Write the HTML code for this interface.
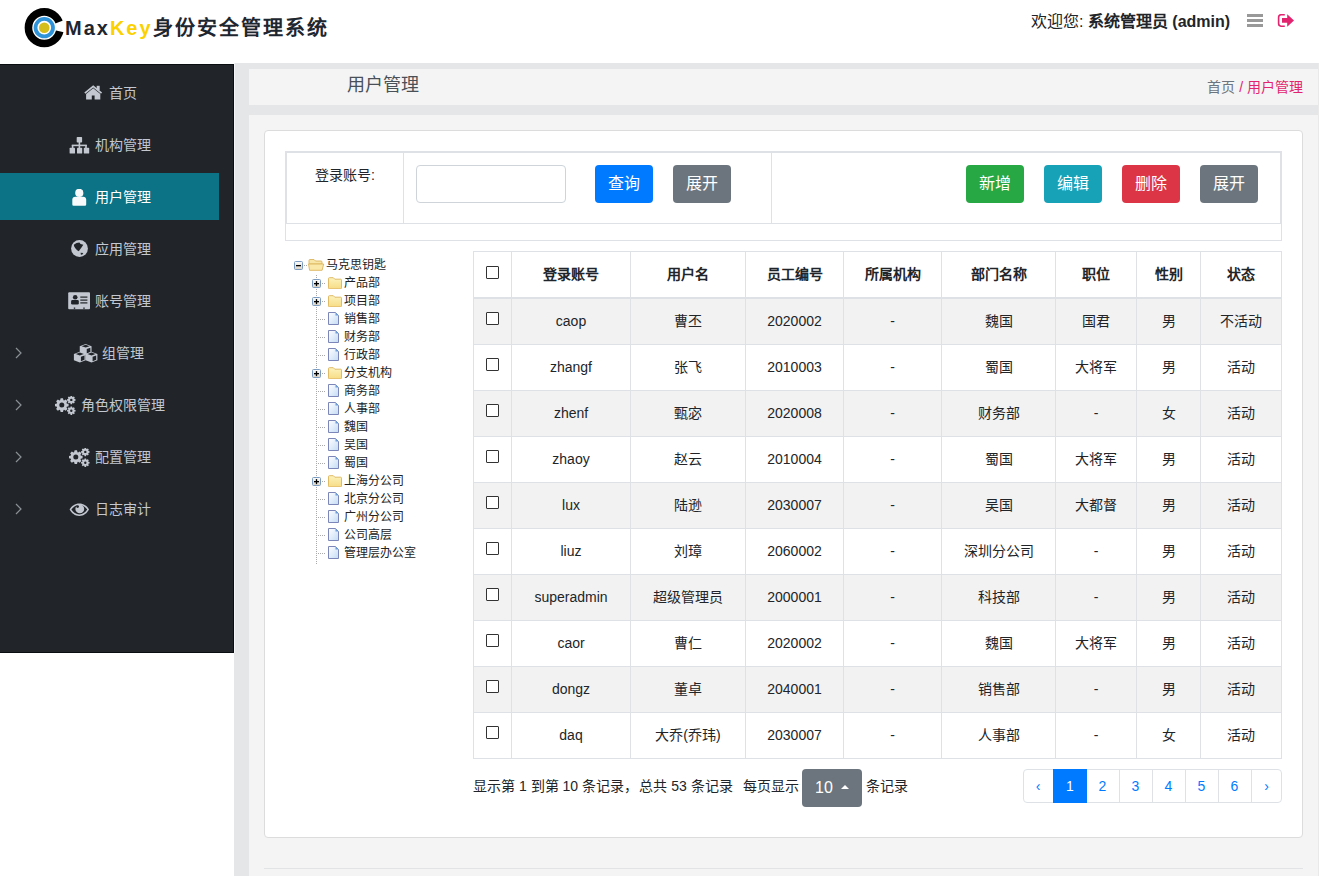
<!DOCTYPE html><html lang="zh-CN"><head><meta charset="utf-8"><title>MaxKey</title><style>
*{box-sizing:border-box;margin:0;padding:0}
html,body{width:1319px;height:876px;overflow:hidden;background:#fff;font-family:"Liberation Sans",sans-serif;color:#212529}
.abs{position:absolute}
.t{position:absolute;white-space:nowrap;line-height:1}
</style></head><body>
<svg class="abs" style="left:22px;top:5px" width="45" height="45" viewBox="0 0 45 45">
<circle cx="22.25" cy="22.7" r="15.8" fill="none" stroke="#000" stroke-width="7.6"/>
<path d="M22.25 22.7L50.26 11.95L51.48 29.45z" fill="#fff"/>
<circle cx="22.25" cy="22.7" r="8.75" fill="none" stroke="#2e93d9" stroke-width="3.8"/>
<circle cx="22.25" cy="22.7" r="5.3" fill="#d4be1c"/>
</svg>
<div class="t" style="left:65px;top:18px;font-size:20px;font-weight:bold;letter-spacing:2px;color:#1e2630">Max<span style="color:#fcd100">Key</span>身份安全管理系统</div>
<div class="t" style="left:1031px;top:14px;font-size:16px;color:#212529">欢迎您: <b>系统管理员 (admin)</b></div>
<div class="abs" style="left:1247px;top:14px;width:16px;height:13px;background:linear-gradient(#999 0,#999 3px,transparent 3px,transparent 5px,#999 5px,#999 8px,transparent 8px,transparent 10px,#999 10px,#999 13px,transparent 13px)"></div>
<svg class="abs" style="left:1277px;top:14px" width="17" height="13" viewBox="0 0 17 13">
<path d="M7.8 0.8H4A2.6 2.6 0 0 0 1.6 3.4v6.2A2.6 2.6 0 0 0 4 12.2H7.8" fill="none" stroke="#e2246f" stroke-width="1.6"/>
<path d="M5 3.9H10.2V0.3L17 6.5L10.2 12.8V8.7H5z" fill="#e2246f"/>
</svg>
<div class="abs" style="left:234px;top:63px;width:1085px;height:813px;background:#e5e6e8"></div>
<div class="abs" style="left:234px;top:63px;width:1px;height:590px;background:#f3f4f6"></div>
<div class="abs" style="left:249px;top:69px;width:1069px;height:36px;background:#f4f4f4"></div>
<div class="abs" style="left:249px;top:115px;width:1069px;height:761px;background:#f4f4f4"></div>
<div class="abs" style="left:1318px;top:63px;width:1px;height:813px;background:#e9e9ea"></div>
<div class="t" style="left:347px;top:76px;font-size:18px;color:#495057">用户管理</div>
<div class="t" style="right:16px;top:80px;font-size:14px;color:#6c757d">首页 <span style="color:#e2246f">/ 用户管理</span></div>
<div class="abs" style="left:-1px;top:64px;width:235px;height:589px;background:#212529;border:1px solid #0b0e11"></div>
<div class="abs" style="left:0;top:173px;width:219px;height:47px;background:#0c7285"></div>
<div class="abs" style="left:84px;top:85px;display:flex"><svg width="19" height="15" viewBox="0 0 19 15"><path d="M0.3 7.5L9.2 0.3L18.1 7.5L17 8.7L9.2 2.4L1.4 8.7z" fill="#c2c7d0"/><rect x="12.7" y="0.8" width="3" height="4.5" fill="#c2c7d0"/><path d="M2.1 9L9.2 3.2L16.3 9V14.6H10.6V10.5H7.8V14.6H2.1z" fill="#c2c7d0"/></svg></div>
<div class="t" style="left:109px;top:86px;font-size:14px;color:#c2c7d0">首页</div>
<div class="abs" style="left:69px;top:137px;display:flex"><svg width="21" height="17" viewBox="0 0 21 17"><g fill="#c2c7d0"><rect x="7.7" y="0" width="5.4" height="5.4" rx="0.7"/><rect x="9.6" y="5" width="1.6" height="3.5"/><rect x="2.8" y="7.6" width="15" height="1.6"/><rect x="2.8" y="8" width="1.6" height="3"/><rect x="9.6" y="8" width="1.6" height="3"/><rect x="16.2" y="8" width="1.6" height="3"/><rect x="0.6" y="10.8" width="5.4" height="5.8" rx="0.7"/><rect x="8" y="10.8" width="5.2" height="5.8" rx="0.7"/><rect x="14.8" y="10.8" width="5.4" height="5.8" rx="0.7"/></g></svg></div>
<div class="t" style="left:95px;top:138px;font-size:14px;color:#c2c7d0">机构管理</div>
<div class="abs" style="left:72px;top:189px;display:flex"><svg width="15" height="18" viewBox="0 0 15 18"><circle cx="7.3" cy="3.9" r="4.1" fill="#f8f9fa"/><path d="M0.3 10.6A3 3 0 0 1 3.3 7.7H11.2A3 3 0 0 1 14.2 10.6V15.5A1.3 1.3 0 0 1 12.9 16.8H1.6A1.3 1.3 0 0 1 0.3 15.5z" fill="#f8f9fa"/></svg></div>
<div class="t" style="left:95px;top:190px;font-size:14px;color:#fff">用户管理</div>
<div class="abs" style="left:71px;top:240px;display:flex"><svg width="17" height="17" viewBox="0 0 17 17"><circle cx="8.5" cy="8.5" r="8.4" fill="#c2c7d0"/><path d="M2.8 4.7L5.5 2.9L8.4 2.6L9.6 4.1L12.3 4.7L10.5 7.4L9 9.5L7.8 11.2L6.1 10.3L4.3 8.3L3.1 6.2z" fill="#212529"/><path d="M9.6 12.7L12.3 13L11.4 14.5L9.9 14.8z" fill="#212529"/></svg></div>
<div class="t" style="left:95px;top:242px;font-size:14px;color:#c2c7d0">应用管理</div>
<div class="abs" style="left:68px;top:292px;display:flex"><svg width="23" height="18" viewBox="0 0 23 18"><rect x="0.2" y="0.3" width="21.8" height="17" rx="1" fill="#c2c7d0"/><circle cx="7.2" cy="5.3" r="2.3" fill="#212529"/><rect x="3.1" y="8.1" width="7.7" height="4.4" rx="1.3" fill="#212529"/><rect x="12.3" y="4.5" width="7.1" height="1.2" fill="#212529"/><rect x="12.3" y="7.5" width="7.1" height="1.2" fill="#212529"/><rect x="12.3" y="10.3" width="7.1" height="1.2" fill="#212529"/><rect x="5.8" y="15.4" width="1.4" height="1.9" fill="#3a3f45"/><rect x="15.3" y="15.4" width="1.4" height="1.9" fill="#3a3f45"/></svg></div>
<div class="t" style="left:95px;top:294px;font-size:14px;color:#c2c7d0">账号管理</div>
<div class="abs" style="left:73px;top:343px;display:flex"><svg width="25" height="21" viewBox="0 0 25 21"><path d="M6.75 3.20L12.65 0.90L18.55 3.20L18.55 9.50L12.65 11.80L6.75 9.50z" fill="#c2c7d0"/><path d="M8.65 3.20L12.65 1.80L16.65 3.20L12.65 4.60zM13.75 6.00L17.35 4.70L17.35 8.90L13.75 10.40z" fill="#212529"/><path d="M0.90 11.00L6.80 8.70L12.70 11.00L12.70 17.30L6.80 19.60L0.90 17.30z" fill="#c2c7d0"/><path d="M2.80 11.00L6.80 9.60L10.80 11.00L6.80 12.40zM7.90 13.80L11.50 12.50L11.50 16.70L7.90 18.20z" fill="#212529"/><path d="M12.60 11.00L18.50 8.70L24.40 11.00L24.40 17.30L18.50 19.60L12.60 17.30z" fill="#c2c7d0"/><path d="M14.50 11.00L18.50 9.60L22.50 11.00L18.50 12.40zM19.60 13.80L23.20 12.50L23.20 16.70L19.60 18.20z" fill="#212529"/></svg></div>
<div class="t" style="left:102px;top:346px;font-size:14px;color:#c2c7d0">组管理</div>
<svg class="abs" style="left:15px;top:347px" width="7" height="12" viewBox="0 0 7 12"><path d="M1 1l5 5-5 5" fill="none" stroke="#8b9096" stroke-width="1.2"/></svg>
<div class="abs" style="left:54px;top:396px;display:flex"><svg width="22" height="19" viewBox="0 0 22 19"><path d="M12.71 7.39L14.60 7.91L14.60 10.29L12.71 10.81L12.48 11.36L13.45 13.07L11.77 14.75L10.06 13.78L9.51 14.01L8.99 15.90L6.61 15.90L6.09 14.01L5.54 13.78L3.83 14.75L2.15 13.07L3.12 11.36L2.89 10.81L1.00 10.29L1.00 7.91L2.89 7.39L3.12 6.84L2.15 5.13L3.83 3.45L5.54 4.42L6.09 4.19L6.61 2.30L8.99 2.30L9.51 4.19L10.06 4.42L11.77 3.45L13.45 5.13L12.48 6.84zM10.30 9.10A2.5 2.5 0 1 0 5.30 9.10A2.5 2.5 0 1 0 10.30 9.10zM20.32 2.84L21.54 3.16L21.54 4.64L20.32 4.96L20.18 5.29L20.82 6.37L19.77 7.42L18.69 6.78L18.36 6.92L18.04 8.14L16.56 8.14L16.24 6.92L15.91 6.78L14.83 7.42L13.78 6.37L14.42 5.29L14.28 4.96L13.06 4.64L13.06 3.16L14.28 2.84L14.42 2.51L13.78 1.43L14.83 0.38L15.91 1.02L16.24 0.88L16.56 -0.34L18.04 -0.34L18.36 0.88L18.69 1.02L19.77 0.38L20.82 1.43L20.18 2.51zM18.50 3.90A1.2 1.2 0 1 0 16.10 3.90A1.2 1.2 0 1 0 18.50 3.90zM20.32 13.64L21.54 13.96L21.54 15.44L20.32 15.76L20.18 16.09L20.82 17.17L19.77 18.22L18.69 17.58L18.36 17.72L18.04 18.94L16.56 18.94L16.24 17.72L15.91 17.58L14.83 18.22L13.78 17.17L14.42 16.09L14.28 15.76L13.06 15.44L13.06 13.96L14.28 13.64L14.42 13.31L13.78 12.23L14.83 11.18L15.91 11.82L16.24 11.68L16.56 10.46L18.04 10.46L18.36 11.68L18.69 11.82L19.77 11.18L20.82 12.23L20.18 13.31zM18.50 14.70A1.2 1.2 0 1 0 16.10 14.70A1.2 1.2 0 1 0 18.50 14.70z" fill="#c2c7d0" fill-rule="evenodd"/></svg></div>
<div class="t" style="left:81px;top:398px;font-size:14px;color:#c2c7d0">角色权限管理</div>
<svg class="abs" style="left:15px;top:399px" width="7" height="12" viewBox="0 0 7 12"><path d="M1 1l5 5-5 5" fill="none" stroke="#8b9096" stroke-width="1.2"/></svg>
<div class="abs" style="left:68px;top:448px;display:flex"><svg width="22" height="19" viewBox="0 0 22 19"><path d="M12.71 7.39L14.60 7.91L14.60 10.29L12.71 10.81L12.48 11.36L13.45 13.07L11.77 14.75L10.06 13.78L9.51 14.01L8.99 15.90L6.61 15.90L6.09 14.01L5.54 13.78L3.83 14.75L2.15 13.07L3.12 11.36L2.89 10.81L1.00 10.29L1.00 7.91L2.89 7.39L3.12 6.84L2.15 5.13L3.83 3.45L5.54 4.42L6.09 4.19L6.61 2.30L8.99 2.30L9.51 4.19L10.06 4.42L11.77 3.45L13.45 5.13L12.48 6.84zM10.30 9.10A2.5 2.5 0 1 0 5.30 9.10A2.5 2.5 0 1 0 10.30 9.10zM20.32 2.84L21.54 3.16L21.54 4.64L20.32 4.96L20.18 5.29L20.82 6.37L19.77 7.42L18.69 6.78L18.36 6.92L18.04 8.14L16.56 8.14L16.24 6.92L15.91 6.78L14.83 7.42L13.78 6.37L14.42 5.29L14.28 4.96L13.06 4.64L13.06 3.16L14.28 2.84L14.42 2.51L13.78 1.43L14.83 0.38L15.91 1.02L16.24 0.88L16.56 -0.34L18.04 -0.34L18.36 0.88L18.69 1.02L19.77 0.38L20.82 1.43L20.18 2.51zM18.50 3.90A1.2 1.2 0 1 0 16.10 3.90A1.2 1.2 0 1 0 18.50 3.90zM20.32 13.64L21.54 13.96L21.54 15.44L20.32 15.76L20.18 16.09L20.82 17.17L19.77 18.22L18.69 17.58L18.36 17.72L18.04 18.94L16.56 18.94L16.24 17.72L15.91 17.58L14.83 18.22L13.78 17.17L14.42 16.09L14.28 15.76L13.06 15.44L13.06 13.96L14.28 13.64L14.42 13.31L13.78 12.23L14.83 11.18L15.91 11.82L16.24 11.68L16.56 10.46L18.04 10.46L18.36 11.68L18.69 11.82L19.77 11.18L20.82 12.23L20.18 13.31zM18.50 14.70A1.2 1.2 0 1 0 16.10 14.70A1.2 1.2 0 1 0 18.50 14.70z" fill="#c2c7d0" fill-rule="evenodd"/></svg></div>
<div class="t" style="left:95px;top:450px;font-size:14px;color:#c2c7d0">配置管理</div>
<svg class="abs" style="left:15px;top:451px" width="7" height="12" viewBox="0 0 7 12"><path d="M1 1l5 5-5 5" fill="none" stroke="#8b9096" stroke-width="1.2"/></svg>
<div class="abs" style="left:69px;top:503px;display:flex"><svg width="21" height="14" viewBox="0 0 21 14"><path d="M10.3 0.4C6 0.4 2.5 2.8 0.6 6.4 2.5 10 6 12.9 10.3 12.9S18.1 10 20 6.4C18.1 2.8 14.6 0.4 10.3 0.4z" fill="#c2c7d0"/><path d="M10.3 1.9C7 1.9 4.2 3.7 2.4 6.4 4.2 9.2 7 11.4 10.3 11.4S16.4 9.2 18.2 6.4C16.4 3.7 13.6 1.9 10.3 1.9z" fill="#212529"/><circle cx="10.8" cy="5.9" r="4.4" fill="#c2c7d0"/><circle cx="8.6" cy="3.6" r="1.4" fill="#212529"/></svg></div>
<div class="t" style="left:95px;top:502px;font-size:14px;color:#c2c7d0">日志审计</div>
<svg class="abs" style="left:15px;top:503px" width="7" height="12" viewBox="0 0 7 12"><path d="M1 1l5 5-5 5" fill="none" stroke="#8b9096" stroke-width="1.2"/></svg>
<div class="abs" style="left:264px;top:130px;width:1039px;height:708px;background:#fff;border:1px solid #dcdcdc;border-radius:4px"></div>
<div class="abs" style="left:264px;top:868px;width:1039px;height:1px;background:#e2e3e5"></div>
<div class="abs" style="left:285px;top:151px;width:997px;height:90px;border:1px solid #dee2e6"></div>
<div class="abs" style="left:286px;top:152px;width:995px;height:72px;border:1px solid #dee2e6"></div>
<div class="abs" style="left:403px;top:152px;width:1px;height:72px;background:#dee2e6"></div>
<div class="abs" style="left:771px;top:152px;width:1px;height:72px;background:#dee2e6"></div>
<div class="t" style="left:315px;top:168px;font-size:14px;color:#212529">登录账号:</div>
<div class="abs" style="left:416px;top:165px;width:150px;height:38px;border:1px solid #ced4da;border-radius:4px"></div>
<div class="abs" style="left:595px;top:165px;width:58px;height:38px;background:#007bff;border-radius:4px;color:#fff;font-size:16px;line-height:38px;text-align:center">查询</div>
<div class="abs" style="left:673px;top:165px;width:58px;height:38px;background:#6c757d;border-radius:4px;color:#fff;font-size:16px;line-height:38px;text-align:center">展开</div>
<div class="abs" style="left:966px;top:165px;width:58px;height:38px;background:#28a745;border-radius:4px;color:#fff;font-size:16px;line-height:38px;text-align:center">新增</div>
<div class="abs" style="left:1044px;top:165px;width:58px;height:38px;background:#17a2b8;border-radius:4px;color:#fff;font-size:16px;line-height:38px;text-align:center">编辑</div>
<div class="abs" style="left:1122px;top:165px;width:58px;height:38px;background:#dc3545;border-radius:4px;color:#fff;font-size:16px;line-height:38px;text-align:center">删除</div>
<div class="abs" style="left:1200px;top:165px;width:58px;height:38px;background:#6c757d;border-radius:4px;color:#fff;font-size:16px;line-height:38px;text-align:center">展开</div>
<div class="abs" style="left:316px;top:275px;width:1px;height:289px;background:repeating-linear-gradient(#aaa 0,#aaa 1px,transparent 1px,transparent 2px)"></div>
<div class="abs" style="left:294px;top:261px;width:9px;height:9px;display:flex"><svg width="9" height="9" viewBox="0 0 9 9"><defs><linearGradient id="gsw" x1="0" y1="0" x2="0" y2="1"><stop offset="0" stop-color="#fdfdfd"/><stop offset="1" stop-color="#ddd3c3"/></linearGradient></defs><rect x="0.5" y="0.5" width="8" height="8" rx="1" fill="url(#gsw)" stroke="#7b9cc0"/><rect x="2" y="4" width="5" height="1.3" fill="#000"/></svg></div>
<div class="abs" style="left:304px;top:265px;width:4px;height:1px;background:repeating-linear-gradient(90deg,#aaa 0,#aaa 1px,transparent 1px,transparent 2px)"></div>
<div class="abs" style="left:308px;top:258px;display:flex"><svg width="17" height="13" viewBox="0 0 17 13"><path d="M1 2.5a1 1 0 0 1 1-1h4l1.5 1.5H13a1 1 0 0 1 1 1V6H1z" fill="#f7e6a6" stroke="#dcb45c" stroke-width="0.9"/><path d="M0.5 6h15.2l-1.6 6.3H1.6z" fill="#f9e8a8" stroke="#dcb45c" stroke-width="0.9"/></svg></div>
<div class="t" style="left:326px;top:259px;font-size:12px;color:#222">马克思钥匙</div>
<div class="abs" style="left:312px;top:279px;width:9px;height:9px;display:flex"><svg width="9" height="9" viewBox="0 0 9 9"><rect x="0.5" y="0.5" width="8" height="8" rx="1" fill="url(#gsw)" stroke="#7b9cc0"/><rect x="2" y="4" width="5" height="1.3" fill="#000"/><rect x="3.85" y="2.1" width="1.3" height="5" fill="#000"/></svg></div>
<div class="abs" style="left:322px;top:283px;width:4px;height:1px;background:repeating-linear-gradient(90deg,#aaa 0,#aaa 1px,transparent 1px,transparent 2px)"></div>
<div class="abs" style="left:328px;top:277px;display:flex"><svg width="14" height="12" viewBox="0 0 14 12"><defs><linearGradient id="gfd" x1="0" y1="0" x2="0" y2="1"><stop offset="0" stop-color="#fdf3bd"/><stop offset="1" stop-color="#f6dc85"/></linearGradient></defs><path d="M0.5 1.6a0.9 0.9 0 0 1 0.9-0.9h3.9l1.5 1.5h5.8a0.9 0.9 0 0 1 0.9 0.9v7.8a0.9 0.9 0 0 1-0.9 0.9H1.4a0.9 0.9 0 0 1-0.9-0.9z" fill="url(#gfd)" stroke="#dcb45a" stroke-width="0.9"/></svg></div>
<div class="t" style="left:344px;top:277px;font-size:12px;color:#222">产品部</div>
<div class="abs" style="left:312px;top:297px;width:9px;height:9px;display:flex"><svg width="9" height="9" viewBox="0 0 9 9"><rect x="0.5" y="0.5" width="8" height="8" rx="1" fill="url(#gsw)" stroke="#7b9cc0"/><rect x="2" y="4" width="5" height="1.3" fill="#000"/><rect x="3.85" y="2.1" width="1.3" height="5" fill="#000"/></svg></div>
<div class="abs" style="left:322px;top:301px;width:4px;height:1px;background:repeating-linear-gradient(90deg,#aaa 0,#aaa 1px,transparent 1px,transparent 2px)"></div>
<div class="abs" style="left:328px;top:295px;display:flex"><svg width="14" height="12" viewBox="0 0 14 12"><defs><linearGradient id="gfd" x1="0" y1="0" x2="0" y2="1"><stop offset="0" stop-color="#fdf3bd"/><stop offset="1" stop-color="#f6dc85"/></linearGradient></defs><path d="M0.5 1.6a0.9 0.9 0 0 1 0.9-0.9h3.9l1.5 1.5h5.8a0.9 0.9 0 0 1 0.9 0.9v7.8a0.9 0.9 0 0 1-0.9 0.9H1.4a0.9 0.9 0 0 1-0.9-0.9z" fill="url(#gfd)" stroke="#dcb45a" stroke-width="0.9"/></svg></div>
<div class="t" style="left:344px;top:295px;font-size:12px;color:#222">项目部</div>
<div class="abs" style="left:316px;top:319px;width:9px;height:1px;background:repeating-linear-gradient(90deg,#aaa 0,#aaa 1px,transparent 1px,transparent 2px)"></div>
<div class="abs" style="left:328px;top:312px;display:flex"><svg width="12" height="14" viewBox="0 0 12 14"><defs><linearGradient id="gpg" x1="0" y1="0" x2="1" y2="1"><stop offset="0" stop-color="#ffffff"/><stop offset="1" stop-color="#c4dcf5"/></linearGradient></defs><path d="M0.5 0.5h7l3 3v9H0.5z" fill="url(#gpg)" stroke="#7d86b8" stroke-width="1"/><path d="M7.5 0.5l3 3h-3z" fill="#6aa0e0"/></svg></div>
<div class="t" style="left:344px;top:313px;font-size:12px;color:#222">销售部</div>
<div class="abs" style="left:316px;top:337px;width:9px;height:1px;background:repeating-linear-gradient(90deg,#aaa 0,#aaa 1px,transparent 1px,transparent 2px)"></div>
<div class="abs" style="left:328px;top:330px;display:flex"><svg width="12" height="14" viewBox="0 0 12 14"><defs><linearGradient id="gpg" x1="0" y1="0" x2="1" y2="1"><stop offset="0" stop-color="#ffffff"/><stop offset="1" stop-color="#c4dcf5"/></linearGradient></defs><path d="M0.5 0.5h7l3 3v9H0.5z" fill="url(#gpg)" stroke="#7d86b8" stroke-width="1"/><path d="M7.5 0.5l3 3h-3z" fill="#6aa0e0"/></svg></div>
<div class="t" style="left:344px;top:331px;font-size:12px;color:#222">财务部</div>
<div class="abs" style="left:316px;top:355px;width:9px;height:1px;background:repeating-linear-gradient(90deg,#aaa 0,#aaa 1px,transparent 1px,transparent 2px)"></div>
<div class="abs" style="left:328px;top:348px;display:flex"><svg width="12" height="14" viewBox="0 0 12 14"><defs><linearGradient id="gpg" x1="0" y1="0" x2="1" y2="1"><stop offset="0" stop-color="#ffffff"/><stop offset="1" stop-color="#c4dcf5"/></linearGradient></defs><path d="M0.5 0.5h7l3 3v9H0.5z" fill="url(#gpg)" stroke="#7d86b8" stroke-width="1"/><path d="M7.5 0.5l3 3h-3z" fill="#6aa0e0"/></svg></div>
<div class="t" style="left:344px;top:349px;font-size:12px;color:#222">行政部</div>
<div class="abs" style="left:312px;top:369px;width:9px;height:9px;display:flex"><svg width="9" height="9" viewBox="0 0 9 9"><rect x="0.5" y="0.5" width="8" height="8" rx="1" fill="url(#gsw)" stroke="#7b9cc0"/><rect x="2" y="4" width="5" height="1.3" fill="#000"/><rect x="3.85" y="2.1" width="1.3" height="5" fill="#000"/></svg></div>
<div class="abs" style="left:322px;top:373px;width:4px;height:1px;background:repeating-linear-gradient(90deg,#aaa 0,#aaa 1px,transparent 1px,transparent 2px)"></div>
<div class="abs" style="left:328px;top:367px;display:flex"><svg width="14" height="12" viewBox="0 0 14 12"><defs><linearGradient id="gfd" x1="0" y1="0" x2="0" y2="1"><stop offset="0" stop-color="#fdf3bd"/><stop offset="1" stop-color="#f6dc85"/></linearGradient></defs><path d="M0.5 1.6a0.9 0.9 0 0 1 0.9-0.9h3.9l1.5 1.5h5.8a0.9 0.9 0 0 1 0.9 0.9v7.8a0.9 0.9 0 0 1-0.9 0.9H1.4a0.9 0.9 0 0 1-0.9-0.9z" fill="url(#gfd)" stroke="#dcb45a" stroke-width="0.9"/></svg></div>
<div class="t" style="left:344px;top:367px;font-size:12px;color:#222">分支机构</div>
<div class="abs" style="left:316px;top:391px;width:9px;height:1px;background:repeating-linear-gradient(90deg,#aaa 0,#aaa 1px,transparent 1px,transparent 2px)"></div>
<div class="abs" style="left:328px;top:384px;display:flex"><svg width="12" height="14" viewBox="0 0 12 14"><defs><linearGradient id="gpg" x1="0" y1="0" x2="1" y2="1"><stop offset="0" stop-color="#ffffff"/><stop offset="1" stop-color="#c4dcf5"/></linearGradient></defs><path d="M0.5 0.5h7l3 3v9H0.5z" fill="url(#gpg)" stroke="#7d86b8" stroke-width="1"/><path d="M7.5 0.5l3 3h-3z" fill="#6aa0e0"/></svg></div>
<div class="t" style="left:344px;top:385px;font-size:12px;color:#222">商务部</div>
<div class="abs" style="left:316px;top:409px;width:9px;height:1px;background:repeating-linear-gradient(90deg,#aaa 0,#aaa 1px,transparent 1px,transparent 2px)"></div>
<div class="abs" style="left:328px;top:402px;display:flex"><svg width="12" height="14" viewBox="0 0 12 14"><defs><linearGradient id="gpg" x1="0" y1="0" x2="1" y2="1"><stop offset="0" stop-color="#ffffff"/><stop offset="1" stop-color="#c4dcf5"/></linearGradient></defs><path d="M0.5 0.5h7l3 3v9H0.5z" fill="url(#gpg)" stroke="#7d86b8" stroke-width="1"/><path d="M7.5 0.5l3 3h-3z" fill="#6aa0e0"/></svg></div>
<div class="t" style="left:344px;top:403px;font-size:12px;color:#222">人事部</div>
<div class="abs" style="left:316px;top:427px;width:9px;height:1px;background:repeating-linear-gradient(90deg,#aaa 0,#aaa 1px,transparent 1px,transparent 2px)"></div>
<div class="abs" style="left:328px;top:420px;display:flex"><svg width="12" height="14" viewBox="0 0 12 14"><defs><linearGradient id="gpg" x1="0" y1="0" x2="1" y2="1"><stop offset="0" stop-color="#ffffff"/><stop offset="1" stop-color="#c4dcf5"/></linearGradient></defs><path d="M0.5 0.5h7l3 3v9H0.5z" fill="url(#gpg)" stroke="#7d86b8" stroke-width="1"/><path d="M7.5 0.5l3 3h-3z" fill="#6aa0e0"/></svg></div>
<div class="t" style="left:344px;top:421px;font-size:12px;color:#222">魏国</div>
<div class="abs" style="left:316px;top:445px;width:9px;height:1px;background:repeating-linear-gradient(90deg,#aaa 0,#aaa 1px,transparent 1px,transparent 2px)"></div>
<div class="abs" style="left:328px;top:438px;display:flex"><svg width="12" height="14" viewBox="0 0 12 14"><defs><linearGradient id="gpg" x1="0" y1="0" x2="1" y2="1"><stop offset="0" stop-color="#ffffff"/><stop offset="1" stop-color="#c4dcf5"/></linearGradient></defs><path d="M0.5 0.5h7l3 3v9H0.5z" fill="url(#gpg)" stroke="#7d86b8" stroke-width="1"/><path d="M7.5 0.5l3 3h-3z" fill="#6aa0e0"/></svg></div>
<div class="t" style="left:344px;top:439px;font-size:12px;color:#222">吴国</div>
<div class="abs" style="left:316px;top:463px;width:9px;height:1px;background:repeating-linear-gradient(90deg,#aaa 0,#aaa 1px,transparent 1px,transparent 2px)"></div>
<div class="abs" style="left:328px;top:456px;display:flex"><svg width="12" height="14" viewBox="0 0 12 14"><defs><linearGradient id="gpg" x1="0" y1="0" x2="1" y2="1"><stop offset="0" stop-color="#ffffff"/><stop offset="1" stop-color="#c4dcf5"/></linearGradient></defs><path d="M0.5 0.5h7l3 3v9H0.5z" fill="url(#gpg)" stroke="#7d86b8" stroke-width="1"/><path d="M7.5 0.5l3 3h-3z" fill="#6aa0e0"/></svg></div>
<div class="t" style="left:344px;top:457px;font-size:12px;color:#222">蜀国</div>
<div class="abs" style="left:312px;top:477px;width:9px;height:9px;display:flex"><svg width="9" height="9" viewBox="0 0 9 9"><rect x="0.5" y="0.5" width="8" height="8" rx="1" fill="url(#gsw)" stroke="#7b9cc0"/><rect x="2" y="4" width="5" height="1.3" fill="#000"/><rect x="3.85" y="2.1" width="1.3" height="5" fill="#000"/></svg></div>
<div class="abs" style="left:322px;top:481px;width:4px;height:1px;background:repeating-linear-gradient(90deg,#aaa 0,#aaa 1px,transparent 1px,transparent 2px)"></div>
<div class="abs" style="left:328px;top:475px;display:flex"><svg width="14" height="12" viewBox="0 0 14 12"><defs><linearGradient id="gfd" x1="0" y1="0" x2="0" y2="1"><stop offset="0" stop-color="#fdf3bd"/><stop offset="1" stop-color="#f6dc85"/></linearGradient></defs><path d="M0.5 1.6a0.9 0.9 0 0 1 0.9-0.9h3.9l1.5 1.5h5.8a0.9 0.9 0 0 1 0.9 0.9v7.8a0.9 0.9 0 0 1-0.9 0.9H1.4a0.9 0.9 0 0 1-0.9-0.9z" fill="url(#gfd)" stroke="#dcb45a" stroke-width="0.9"/></svg></div>
<div class="t" style="left:344px;top:475px;font-size:12px;color:#222">上海分公司</div>
<div class="abs" style="left:316px;top:499px;width:9px;height:1px;background:repeating-linear-gradient(90deg,#aaa 0,#aaa 1px,transparent 1px,transparent 2px)"></div>
<div class="abs" style="left:328px;top:492px;display:flex"><svg width="12" height="14" viewBox="0 0 12 14"><defs><linearGradient id="gpg" x1="0" y1="0" x2="1" y2="1"><stop offset="0" stop-color="#ffffff"/><stop offset="1" stop-color="#c4dcf5"/></linearGradient></defs><path d="M0.5 0.5h7l3 3v9H0.5z" fill="url(#gpg)" stroke="#7d86b8" stroke-width="1"/><path d="M7.5 0.5l3 3h-3z" fill="#6aa0e0"/></svg></div>
<div class="t" style="left:344px;top:493px;font-size:12px;color:#222">北京分公司</div>
<div class="abs" style="left:316px;top:517px;width:9px;height:1px;background:repeating-linear-gradient(90deg,#aaa 0,#aaa 1px,transparent 1px,transparent 2px)"></div>
<div class="abs" style="left:328px;top:510px;display:flex"><svg width="12" height="14" viewBox="0 0 12 14"><defs><linearGradient id="gpg" x1="0" y1="0" x2="1" y2="1"><stop offset="0" stop-color="#ffffff"/><stop offset="1" stop-color="#c4dcf5"/></linearGradient></defs><path d="M0.5 0.5h7l3 3v9H0.5z" fill="url(#gpg)" stroke="#7d86b8" stroke-width="1"/><path d="M7.5 0.5l3 3h-3z" fill="#6aa0e0"/></svg></div>
<div class="t" style="left:344px;top:511px;font-size:12px;color:#222">广州分公司</div>
<div class="abs" style="left:316px;top:535px;width:9px;height:1px;background:repeating-linear-gradient(90deg,#aaa 0,#aaa 1px,transparent 1px,transparent 2px)"></div>
<div class="abs" style="left:328px;top:528px;display:flex"><svg width="12" height="14" viewBox="0 0 12 14"><defs><linearGradient id="gpg" x1="0" y1="0" x2="1" y2="1"><stop offset="0" stop-color="#ffffff"/><stop offset="1" stop-color="#c4dcf5"/></linearGradient></defs><path d="M0.5 0.5h7l3 3v9H0.5z" fill="url(#gpg)" stroke="#7d86b8" stroke-width="1"/><path d="M7.5 0.5l3 3h-3z" fill="#6aa0e0"/></svg></div>
<div class="t" style="left:344px;top:529px;font-size:12px;color:#222">公司高层</div>
<div class="abs" style="left:316px;top:553px;width:9px;height:1px;background:repeating-linear-gradient(90deg,#aaa 0,#aaa 1px,transparent 1px,transparent 2px)"></div>
<div class="abs" style="left:328px;top:546px;display:flex"><svg width="12" height="14" viewBox="0 0 12 14"><defs><linearGradient id="gpg" x1="0" y1="0" x2="1" y2="1"><stop offset="0" stop-color="#ffffff"/><stop offset="1" stop-color="#c4dcf5"/></linearGradient></defs><path d="M0.5 0.5h7l3 3v9H0.5z" fill="url(#gpg)" stroke="#7d86b8" stroke-width="1"/><path d="M7.5 0.5l3 3h-3z" fill="#6aa0e0"/></svg></div>
<div class="t" style="left:344px;top:547px;font-size:12px;color:#222">管理层办公室</div>
<div class="abs" style="left:473px;top:251px;width:809px;height:508px;background:#fff"></div>
<div class="abs" style="left:474px;top:299px;width:807px;height:45px;background:#f2f2f2"></div>
<div class="abs" style="left:474px;top:391px;width:807px;height:45px;background:#f2f2f2"></div>
<div class="abs" style="left:474px;top:483px;width:807px;height:45px;background:#f2f2f2"></div>
<div class="abs" style="left:474px;top:575px;width:807px;height:45px;background:#f2f2f2"></div>
<div class="abs" style="left:474px;top:667px;width:807px;height:45px;background:#f2f2f2"></div>
<div class="abs" style="left:473px;top:251px;width:809px;height:1px;background:#dee2e6"></div>
<div class="abs" style="left:473px;top:297px;width:809px;height:2px;background:#dee2e6"></div>
<div class="abs" style="left:473px;top:344px;width:809px;height:1px;background:#dee2e6"></div>
<div class="abs" style="left:473px;top:390px;width:809px;height:1px;background:#dee2e6"></div>
<div class="abs" style="left:473px;top:436px;width:809px;height:1px;background:#dee2e6"></div>
<div class="abs" style="left:473px;top:482px;width:809px;height:1px;background:#dee2e6"></div>
<div class="abs" style="left:473px;top:528px;width:809px;height:1px;background:#dee2e6"></div>
<div class="abs" style="left:473px;top:574px;width:809px;height:1px;background:#dee2e6"></div>
<div class="abs" style="left:473px;top:620px;width:809px;height:1px;background:#dee2e6"></div>
<div class="abs" style="left:473px;top:666px;width:809px;height:1px;background:#dee2e6"></div>
<div class="abs" style="left:473px;top:712px;width:809px;height:1px;background:#dee2e6"></div>
<div class="abs" style="left:473px;top:758px;width:809px;height:1px;background:#dee2e6"></div>
<div class="abs" style="left:473px;top:251px;width:1px;height:508px;background:#dee2e6"></div>
<div class="abs" style="left:511px;top:251px;width:1px;height:508px;background:#dee2e6"></div>
<div class="abs" style="left:630px;top:251px;width:1px;height:508px;background:#dee2e6"></div>
<div class="abs" style="left:745px;top:251px;width:1px;height:508px;background:#dee2e6"></div>
<div class="abs" style="left:843px;top:251px;width:1px;height:508px;background:#dee2e6"></div>
<div class="abs" style="left:941px;top:251px;width:1px;height:508px;background:#dee2e6"></div>
<div class="abs" style="left:1055px;top:251px;width:1px;height:508px;background:#dee2e6"></div>
<div class="abs" style="left:1136px;top:251px;width:1px;height:508px;background:#dee2e6"></div>
<div class="abs" style="left:1200px;top:251px;width:1px;height:508px;background:#dee2e6"></div>
<div class="abs" style="left:1281px;top:251px;width:1px;height:508px;background:#dee2e6"></div>
<div class="abs" style="left:486px;top:266px;width:13px;height:13px;border:1px solid #333;border-radius:1px;background:#fff"></div>
<div class="t" style="left:512px;width:118px;top:267px;font-size:14px;font-weight:bold;text-align:center;color:#212529">登录账号</div>
<div class="t" style="left:631px;width:114px;top:267px;font-size:14px;font-weight:bold;text-align:center;color:#212529">用户名</div>
<div class="t" style="left:746px;width:97px;top:267px;font-size:14px;font-weight:bold;text-align:center;color:#212529">员工编号</div>
<div class="t" style="left:844px;width:97px;top:267px;font-size:14px;font-weight:bold;text-align:center;color:#212529">所属机构</div>
<div class="t" style="left:942px;width:113px;top:267px;font-size:14px;font-weight:bold;text-align:center;color:#212529">部门名称</div>
<div class="t" style="left:1056px;width:80px;top:267px;font-size:14px;font-weight:bold;text-align:center;color:#212529">职位</div>
<div class="t" style="left:1137px;width:63px;top:267px;font-size:14px;font-weight:bold;text-align:center;color:#212529">性别</div>
<div class="t" style="left:1201px;width:80px;top:267px;font-size:14px;font-weight:bold;text-align:center;color:#212529">状态</div>
<div class="abs" style="left:486px;top:312px;width:13px;height:13px;border:1px solid #333;border-radius:1px;background:#fff"></div>
<div class="t" style="left:512px;width:118px;top:314px;font-size:14px;text-align:center;color:#212529">caop</div>
<div class="t" style="left:631px;width:114px;top:314px;font-size:14px;text-align:center;color:#212529">曹丕</div>
<div class="t" style="left:746px;width:97px;top:314px;font-size:14px;text-align:center;color:#212529">2020002</div>
<div class="t" style="left:844px;width:97px;top:314px;font-size:14px;text-align:center;color:#212529">-</div>
<div class="t" style="left:942px;width:113px;top:314px;font-size:14px;text-align:center;color:#212529">魏国</div>
<div class="t" style="left:1056px;width:80px;top:314px;font-size:14px;text-align:center;color:#212529">国君</div>
<div class="t" style="left:1137px;width:63px;top:314px;font-size:14px;text-align:center;color:#212529">男</div>
<div class="t" style="left:1201px;width:80px;top:314px;font-size:14px;text-align:center;color:#212529">不活动</div>
<div class="abs" style="left:486px;top:358px;width:13px;height:13px;border:1px solid #333;border-radius:1px;background:#fff"></div>
<div class="t" style="left:512px;width:118px;top:360px;font-size:14px;text-align:center;color:#212529">zhangf</div>
<div class="t" style="left:631px;width:114px;top:360px;font-size:14px;text-align:center;color:#212529">张飞</div>
<div class="t" style="left:746px;width:97px;top:360px;font-size:14px;text-align:center;color:#212529">2010003</div>
<div class="t" style="left:844px;width:97px;top:360px;font-size:14px;text-align:center;color:#212529">-</div>
<div class="t" style="left:942px;width:113px;top:360px;font-size:14px;text-align:center;color:#212529">蜀国</div>
<div class="t" style="left:1056px;width:80px;top:360px;font-size:14px;text-align:center;color:#212529">大将军</div>
<div class="t" style="left:1137px;width:63px;top:360px;font-size:14px;text-align:center;color:#212529">男</div>
<div class="t" style="left:1201px;width:80px;top:360px;font-size:14px;text-align:center;color:#212529">活动</div>
<div class="abs" style="left:486px;top:404px;width:13px;height:13px;border:1px solid #333;border-radius:1px;background:#fff"></div>
<div class="t" style="left:512px;width:118px;top:406px;font-size:14px;text-align:center;color:#212529">zhenf</div>
<div class="t" style="left:631px;width:114px;top:406px;font-size:14px;text-align:center;color:#212529">甄宓</div>
<div class="t" style="left:746px;width:97px;top:406px;font-size:14px;text-align:center;color:#212529">2020008</div>
<div class="t" style="left:844px;width:97px;top:406px;font-size:14px;text-align:center;color:#212529">-</div>
<div class="t" style="left:942px;width:113px;top:406px;font-size:14px;text-align:center;color:#212529">财务部</div>
<div class="t" style="left:1056px;width:80px;top:406px;font-size:14px;text-align:center;color:#212529">-</div>
<div class="t" style="left:1137px;width:63px;top:406px;font-size:14px;text-align:center;color:#212529">女</div>
<div class="t" style="left:1201px;width:80px;top:406px;font-size:14px;text-align:center;color:#212529">活动</div>
<div class="abs" style="left:486px;top:450px;width:13px;height:13px;border:1px solid #333;border-radius:1px;background:#fff"></div>
<div class="t" style="left:512px;width:118px;top:452px;font-size:14px;text-align:center;color:#212529">zhaoy</div>
<div class="t" style="left:631px;width:114px;top:452px;font-size:14px;text-align:center;color:#212529">赵云</div>
<div class="t" style="left:746px;width:97px;top:452px;font-size:14px;text-align:center;color:#212529">2010004</div>
<div class="t" style="left:844px;width:97px;top:452px;font-size:14px;text-align:center;color:#212529">-</div>
<div class="t" style="left:942px;width:113px;top:452px;font-size:14px;text-align:center;color:#212529">蜀国</div>
<div class="t" style="left:1056px;width:80px;top:452px;font-size:14px;text-align:center;color:#212529">大将军</div>
<div class="t" style="left:1137px;width:63px;top:452px;font-size:14px;text-align:center;color:#212529">男</div>
<div class="t" style="left:1201px;width:80px;top:452px;font-size:14px;text-align:center;color:#212529">活动</div>
<div class="abs" style="left:486px;top:496px;width:13px;height:13px;border:1px solid #333;border-radius:1px;background:#fff"></div>
<div class="t" style="left:512px;width:118px;top:498px;font-size:14px;text-align:center;color:#212529">lux</div>
<div class="t" style="left:631px;width:114px;top:498px;font-size:14px;text-align:center;color:#212529">陆逊</div>
<div class="t" style="left:746px;width:97px;top:498px;font-size:14px;text-align:center;color:#212529">2030007</div>
<div class="t" style="left:844px;width:97px;top:498px;font-size:14px;text-align:center;color:#212529">-</div>
<div class="t" style="left:942px;width:113px;top:498px;font-size:14px;text-align:center;color:#212529">吴国</div>
<div class="t" style="left:1056px;width:80px;top:498px;font-size:14px;text-align:center;color:#212529">大都督</div>
<div class="t" style="left:1137px;width:63px;top:498px;font-size:14px;text-align:center;color:#212529">男</div>
<div class="t" style="left:1201px;width:80px;top:498px;font-size:14px;text-align:center;color:#212529">活动</div>
<div class="abs" style="left:486px;top:542px;width:13px;height:13px;border:1px solid #333;border-radius:1px;background:#fff"></div>
<div class="t" style="left:512px;width:118px;top:544px;font-size:14px;text-align:center;color:#212529">liuz</div>
<div class="t" style="left:631px;width:114px;top:544px;font-size:14px;text-align:center;color:#212529">刘璋</div>
<div class="t" style="left:746px;width:97px;top:544px;font-size:14px;text-align:center;color:#212529">2060002</div>
<div class="t" style="left:844px;width:97px;top:544px;font-size:14px;text-align:center;color:#212529">-</div>
<div class="t" style="left:942px;width:113px;top:544px;font-size:14px;text-align:center;color:#212529">深圳分公司</div>
<div class="t" style="left:1056px;width:80px;top:544px;font-size:14px;text-align:center;color:#212529">-</div>
<div class="t" style="left:1137px;width:63px;top:544px;font-size:14px;text-align:center;color:#212529">男</div>
<div class="t" style="left:1201px;width:80px;top:544px;font-size:14px;text-align:center;color:#212529">活动</div>
<div class="abs" style="left:486px;top:588px;width:13px;height:13px;border:1px solid #333;border-radius:1px;background:#fff"></div>
<div class="t" style="left:512px;width:118px;top:590px;font-size:14px;text-align:center;color:#212529">superadmin</div>
<div class="t" style="left:631px;width:114px;top:590px;font-size:14px;text-align:center;color:#212529">超级管理员</div>
<div class="t" style="left:746px;width:97px;top:590px;font-size:14px;text-align:center;color:#212529">2000001</div>
<div class="t" style="left:844px;width:97px;top:590px;font-size:14px;text-align:center;color:#212529">-</div>
<div class="t" style="left:942px;width:113px;top:590px;font-size:14px;text-align:center;color:#212529">科技部</div>
<div class="t" style="left:1056px;width:80px;top:590px;font-size:14px;text-align:center;color:#212529">-</div>
<div class="t" style="left:1137px;width:63px;top:590px;font-size:14px;text-align:center;color:#212529">男</div>
<div class="t" style="left:1201px;width:80px;top:590px;font-size:14px;text-align:center;color:#212529">活动</div>
<div class="abs" style="left:486px;top:634px;width:13px;height:13px;border:1px solid #333;border-radius:1px;background:#fff"></div>
<div class="t" style="left:512px;width:118px;top:636px;font-size:14px;text-align:center;color:#212529">caor</div>
<div class="t" style="left:631px;width:114px;top:636px;font-size:14px;text-align:center;color:#212529">曹仁</div>
<div class="t" style="left:746px;width:97px;top:636px;font-size:14px;text-align:center;color:#212529">2020002</div>
<div class="t" style="left:844px;width:97px;top:636px;font-size:14px;text-align:center;color:#212529">-</div>
<div class="t" style="left:942px;width:113px;top:636px;font-size:14px;text-align:center;color:#212529">魏国</div>
<div class="t" style="left:1056px;width:80px;top:636px;font-size:14px;text-align:center;color:#212529">大将军</div>
<div class="t" style="left:1137px;width:63px;top:636px;font-size:14px;text-align:center;color:#212529">男</div>
<div class="t" style="left:1201px;width:80px;top:636px;font-size:14px;text-align:center;color:#212529">活动</div>
<div class="abs" style="left:486px;top:680px;width:13px;height:13px;border:1px solid #333;border-radius:1px;background:#fff"></div>
<div class="t" style="left:512px;width:118px;top:682px;font-size:14px;text-align:center;color:#212529">dongz</div>
<div class="t" style="left:631px;width:114px;top:682px;font-size:14px;text-align:center;color:#212529">董卓</div>
<div class="t" style="left:746px;width:97px;top:682px;font-size:14px;text-align:center;color:#212529">2040001</div>
<div class="t" style="left:844px;width:97px;top:682px;font-size:14px;text-align:center;color:#212529">-</div>
<div class="t" style="left:942px;width:113px;top:682px;font-size:14px;text-align:center;color:#212529">销售部</div>
<div class="t" style="left:1056px;width:80px;top:682px;font-size:14px;text-align:center;color:#212529">-</div>
<div class="t" style="left:1137px;width:63px;top:682px;font-size:14px;text-align:center;color:#212529">男</div>
<div class="t" style="left:1201px;width:80px;top:682px;font-size:14px;text-align:center;color:#212529">活动</div>
<div class="abs" style="left:486px;top:726px;width:13px;height:13px;border:1px solid #333;border-radius:1px;background:#fff"></div>
<div class="t" style="left:512px;width:118px;top:728px;font-size:14px;text-align:center;color:#212529">daq</div>
<div class="t" style="left:631px;width:114px;top:728px;font-size:14px;text-align:center;color:#212529">大乔(乔玮)</div>
<div class="t" style="left:746px;width:97px;top:728px;font-size:14px;text-align:center;color:#212529">2030007</div>
<div class="t" style="left:844px;width:97px;top:728px;font-size:14px;text-align:center;color:#212529">-</div>
<div class="t" style="left:942px;width:113px;top:728px;font-size:14px;text-align:center;color:#212529">人事部</div>
<div class="t" style="left:1056px;width:80px;top:728px;font-size:14px;text-align:center;color:#212529">-</div>
<div class="t" style="left:1137px;width:63px;top:728px;font-size:14px;text-align:center;color:#212529">女</div>
<div class="t" style="left:1201px;width:80px;top:728px;font-size:14px;text-align:center;color:#212529">活动</div>
<div class="t" style="left:473px;top:779px;font-size:14px;color:#212529">显示第 1 到第 10 条记录，</div>
<div class="t" style="left:639px;top:779px;font-size:14px;color:#212529;word-spacing:0.4px">总共 53 条记录</div>
<div class="t" style="left:743px;top:779px;font-size:14px;color:#212529">每页显示</div>
<div class="abs" style="left:802px;top:769px;width:60px;height:38px;background:#6c757d;border-radius:4px"></div>
<div class="t" style="left:815px;top:780px;font-size:16px;color:#fff">10</div>
<div class="abs" style="left:841px;top:785px;width:0;height:0;border-left:4px solid transparent;border-right:4px solid transparent;border-bottom:4px solid #fff"></div>
<div class="t" style="left:866px;top:779px;font-size:14px;color:#212529">条记录</div>
<div class="abs" style="left:1023px;top:769px;width:259px;height:34px;border:1px solid #dee2e6;border-radius:4px"></div>
<div class="abs" style="left:1053px;top:769px;width:34px;height:34px;background:#007bff"></div>
<div class="abs" style="left:1119px;top:770px;width:1px;height:32px;background:#dee2e6"></div>
<div class="abs" style="left:1152px;top:770px;width:1px;height:32px;background:#dee2e6"></div>
<div class="abs" style="left:1185px;top:770px;width:1px;height:32px;background:#dee2e6"></div>
<div class="abs" style="left:1218px;top:770px;width:1px;height:32px;background:#dee2e6"></div>
<div class="abs" style="left:1251px;top:770px;width:1px;height:32px;background:#dee2e6"></div>
<div class="t" style="left:1023px;width:30px;top:779px;font-size:14px;text-align:center;color:#007bff">‹</div>
<div class="t" style="left:1053px;width:34px;top:779px;font-size:14px;text-align:center;color:#fff">1</div>
<div class="t" style="left:1086px;width:33px;top:779px;font-size:14px;text-align:center;color:#007bff">2</div>
<div class="t" style="left:1119px;width:33px;top:779px;font-size:14px;text-align:center;color:#007bff">3</div>
<div class="t" style="left:1152px;width:33px;top:779px;font-size:14px;text-align:center;color:#007bff">4</div>
<div class="t" style="left:1185px;width:33px;top:779px;font-size:14px;text-align:center;color:#007bff">5</div>
<div class="t" style="left:1218px;width:33px;top:779px;font-size:14px;text-align:center;color:#007bff">6</div>
<div class="t" style="left:1251px;width:31px;top:779px;font-size:14px;text-align:center;color:#007bff">›</div>
</body></html>
